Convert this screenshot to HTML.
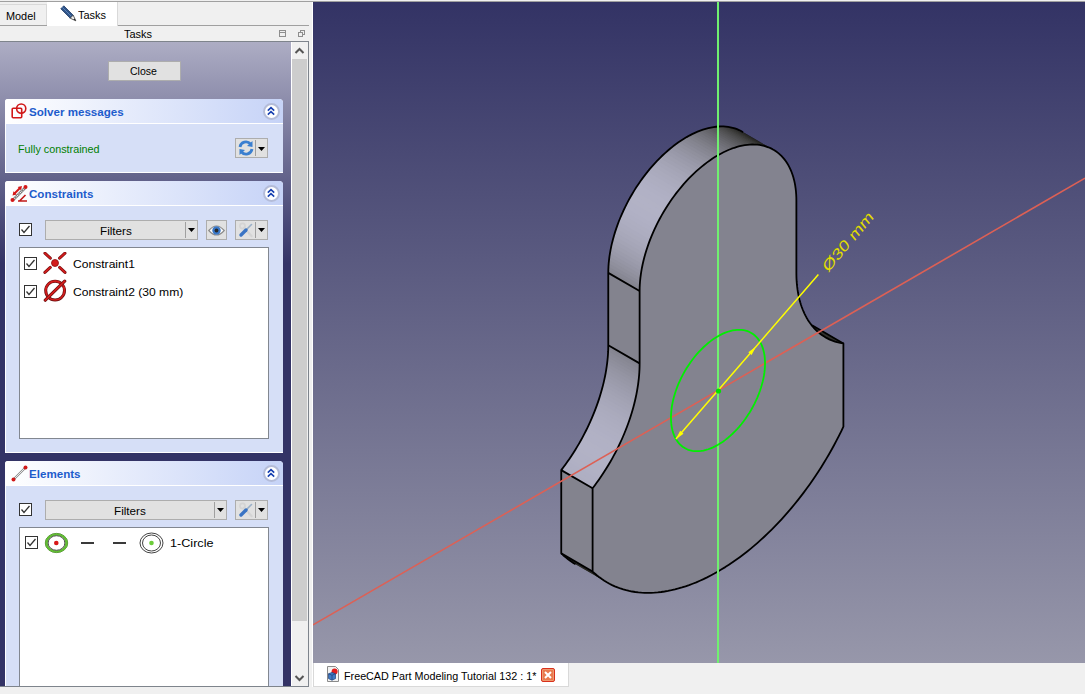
<!DOCTYPE html>
<html><head><meta charset="utf-8">
<style>
*{margin:0;padding:0;box-sizing:border-box}
html,body{width:1085px;height:694px;overflow:hidden;background:#f0f0f0;font-family:"Liberation Sans",sans-serif;font-size:11.7px;color:#000}
.a{position:absolute}
.txt{position:absolute;white-space:nowrap;line-height:1}
.panel{position:absolute;left:5px;width:278px;border-radius:3px 4px 0 0;background:#fff;}
.phead{position:absolute;left:0;top:0;width:278px;height:24px;border-radius:3px 4px 0 0;background:linear-gradient(to right,#ffffff 0%,#c6d3f7 100%)}
.pbody{position:absolute;left:1px;top:25px;width:277px;background:#d6dff7}
.ptitle{position:absolute;left:24px;top:7px;font-weight:bold;font-size:11.6px;color:#1e5ccc;white-space:nowrap;line-height:1}
.coll{position:absolute;left:257.5px;top:3.5px;width:17px;height:17px;border-radius:50%;background:#fff;border:2px solid #b4bcd8}
.cb{position:absolute;width:13px;height:13px;border:1px solid #333;background:#fff}
.btn{position:absolute;background:#e1e1e1;border:1px solid #adadad}
.lst{position:absolute;background:#fff;border:1px solid #828790}
</style></head><body>
<!-- top line -->
<div class="a" style="left:0;top:1px;width:1085px;height:1px;background:#a0a0a0"></div>
<!-- tab bar -->
<div class="a" style="left:0;top:25px;width:309px;height:1px;background:#a0a0a0"></div>
<div class="a" style="left:0;top:4px;width:47px;height:21px;background:#f0f0f0;border-top:1px solid #d9d9d9;border-right:1px solid #d9d9d9"></div>
<div class="txt" style="left:6px;top:10px;font-size:11.7px;transform:scaleX(0.93);transform-origin:0 0">Model</div>
<div class="a" style="left:47px;top:2px;width:71px;height:24px;background:#fff;border-right:1px solid #d9d9d9"></div>
<svg class="a" style="left:60px;top:5px" width="17" height="17"><path d="M0.8 3.8 L3.8 0.8 L13.2 10.2 L10.2 13.2 Z" fill="#2f5488" stroke="#1e3a66" stroke-width="0.8"/><path d="M2.2 2.2 L11.8 11.8" stroke="#5a82b8" stroke-width="1"/><path d="M10.2 13.2 L13.2 10.2 L15.8 15.8 Z" fill="#f4f4f4" stroke="#333" stroke-width="0.8"/><path d="M14.6 13.4 L15.8 15.8 L13.4 14.6Z" fill="#222"/></svg>
<div class="txt" style="left:78px;top:9px;transform:scaleX(0.94);transform-origin:0 0">Tasks</div>
<!-- dock title -->
<div class="txt" style="left:124px;top:28px;transform:scaleX(0.94);transform-origin:0 0">Tasks</div>
<svg class="a" style="left:277px;top:28px" width="32" height="11"><rect x="2.5" y="2.5" width="6" height="6" fill="none" stroke="#8e8e8e"/><line x1="2.5" y1="4.5" x2="8.5" y2="4.5" stroke="#8e8e8e"/><rect x="23.5" y="2.5" width="4" height="4" fill="none" stroke="#8e8e8e"/><rect x="21.5" y="4.5" width="4" height="4" fill="#f0f0f0" stroke="#8e8e8e"/></svg>
<!-- scroll area -->
<div class="a" style="left:0;top:41px;width:309px;height:646px;border-top:1px solid #7e848c;border-right:1px solid #7e848c;border-bottom:1px solid #7e848c;background:linear-gradient(to bottom,#adadc4 0px,#333366 222px,#333366 646px)"></div>
<div class="a" style="left:291px;top:42px;width:17px;height:644px;background:#f0f0f0;border-left:1px solid #fff"></div>
<div class="a" style="left:292px;top:59px;width:15px;height:562px;background:#cdcdcd"></div>
<svg class="a" style="left:292px;top:45px" width="15" height="12"><path d="M3.5 8 L7.5 4 L11.5 8" fill="none" stroke="#555" stroke-width="2"/></svg>
<svg class="a" style="left:292px;top:672px" width="15" height="12"><path d="M3.5 4 L7.5 8 L11.5 4" fill="none" stroke="#555" stroke-width="2"/></svg>
<div class="a" style="left:312px;top:2px;width:1px;height:685px;background:#fff"></div>

<!-- Close button -->
<div class="btn" style="left:108px;top:61px;width:73px;height:20px"></div>
<div class="txt" style="left:129.5px;top:65px;transform:scaleX(0.9);transform-origin:0 0">Close</div>

<!-- Solver messages panel -->
<div class="panel" style="top:99px;height:74px">
  <div class="phead"></div>
  <div class="pbody" style="height:48px"></div>
  <svg class="a" style="left:6px;top:4px" width="16" height="16"><rect x="1.2" y="5.2" width="9.5" height="9.5" rx="1" fill="none" stroke="#d11818" stroke-width="1.6"/><circle cx="10.2" cy="5.6" r="4.6" fill="none" stroke="#d11818" stroke-width="1.6"/></svg>
  <div class="ptitle">Solver messages</div>
  <div class="coll"></div>
  <svg class="a" style="left:259px;top:5px" width="14" height="14"><path d="M3.8 6.6 L7 3.6 L10.2 6.6 M3.8 10.6 L7 7.6 L10.2 10.6" fill="none" stroke="#1840b0" stroke-width="1.6"/></svg>
  <div class="txt" style="left:13px;top:45px;color:#008000;font-size:10.8px">Fully constrained</div>
  <div class="btn" style="left:230px;top:39px;width:33px;height:20px"></div>
  <div class="a" style="left:250px;top:41px;width:1px;height:16px;background:#a0a0a0"></div>
  <svg class="a" style="left:232px;top:40px" width="18" height="18"><path d="M3 8 A6 6 0 0 1 13.5 5" fill="none" stroke="#3a7fd0" stroke-width="2.8"/><path d="M15.5 2 L15.5 8 L10 7Z" fill="#3a7fd0"/><path d="M15 10 A6 6 0 0 1 4.5 13" fill="none" stroke="#3a7fd0" stroke-width="2.8"/><path d="M2.5 16 L2.5 10 L8 11Z" fill="#3a7fd0"/></svg>
  <svg class="a" style="left:253px;top:48px" width="8" height="5"><path d="M0 0 L7 0 L3.5 4Z" fill="#000"/></svg>
</div>

<!-- Constraints panel -->
<div class="panel" style="top:181px;height:272px">
  <div class="phead"></div>
  <div class="pbody" style="height:246px"></div>
  <svg class="a" style="left:5px;top:3px" width="18" height="18"><path d="M4 10 L10.5 3.5" stroke="#d41818" stroke-width="2"/><path d="M2.5 11.5 L3.5 7.2 L6.8 10.5Z M12 2 L7.7 3 L11 6.3Z" fill="#d41818"/><path d="M3 16 L15.5 3.5" stroke="#777" stroke-width="2.6"/><path d="M3 16 L15.5 3.5" stroke="#fff" stroke-width="1.2" stroke-dasharray="1 1"/><circle cx="2.5" cy="16" r="2" fill="#d41818"/><circle cx="15.5" cy="3" r="2" fill="#d41818"/><path d="M8 17 L17 17 M9.5 17 L15.5 11" stroke="#c01818" stroke-width="1.6"/></svg>
  <div class="ptitle">Constraints</div>
  <div class="coll"></div>
  <svg class="a" style="left:259px;top:5px" width="14" height="14"><path d="M3.8 6.6 L7 3.6 L10.2 6.6 M3.8 10.6 L7 7.6 L10.2 10.6" fill="none" stroke="#1840b0" stroke-width="1.6"/></svg>
  <div class="cb" style="left:14px;top:42px"></div>
  <svg class="a" style="left:14px;top:42px" width="13" height="13"><path d="M2.5 6.5 L5 9.5 L10.5 3" fill="none" stroke="#333" stroke-width="1.3"/></svg>
  <div class="btn" style="left:40px;top:39px;width:153px;height:20px"></div>
  <div class="txt" style="left:95px;top:44px">Filters</div>
  <div class="a" style="left:180px;top:41px;width:1px;height:16px;background:#a0a0a0"></div>
  <svg class="a" style="left:183px;top:47px" width="8" height="5"><path d="M0 0 L7 0 L3.5 4Z" fill="#000"/></svg>
  <div class="btn" style="left:201px;top:39px;width:21px;height:20px"></div>
  <svg class="a" style="left:202px;top:41px" width="19" height="17"><path d="M1.8 8.5 Q9.5 -0.5 17.2 8.5 Q9.5 17.5 1.8 8.5Z" fill="#fafafa" stroke="#8a8a8a" stroke-width="1.2"/><circle cx="9.5" cy="8.5" r="4.2" fill="#3a78c8"/><circle cx="9.5" cy="8.5" r="1.9" fill="#2a2a2a"/></svg>
  <div class="btn" style="left:230px;top:39px;width:33px;height:20px"></div>
  <div class="a" style="left:250px;top:41px;width:1px;height:16px;background:#a0a0a0"></div>
  <svg class="a" style="left:233px;top:41px" width="16" height="16"><circle cx="4.5" cy="4" r="2.6" fill="none" stroke="#d4d4d4" stroke-width="1.6"/><path d="M6 6 L13.5 14" stroke="#d4d4d4" stroke-width="2.4" stroke-linecap="round"/><path d="M13.5 2.5 L8 8" stroke="#9ab0c8" stroke-width="1.6" stroke-linecap="round"/><path d="M8 8 L3 13" stroke="#3a74c4" stroke-width="3.4" stroke-linecap="round"/></svg>
  <svg class="a" style="left:253px;top:47px" width="8" height="5"><path d="M0 0 L7 0 L3.5 4Z" fill="#000"/></svg>
  <div class="lst" style="left:14px;top:66px;width:250px;height:192px"></div>
  <div class="cb" style="left:19px;top:76px"></div>
  <svg class="a" style="left:19px;top:76px" width="13" height="13"><path d="M2.5 6.5 L5 9.5 L10.5 3" fill="none" stroke="#333" stroke-width="1.3"/></svg>
  <svg class="a" style="left:38px;top:71px" width="24" height="23"><path d="M1.9 1.2 L7.3 6.2 M22 1.2 L16.6 6.2 M1.9 20.4 L7.3 15.4 M22 20.4 L16.6 15.4" stroke="#7a1010" stroke-width="3" stroke-linecap="round"/><path d="M1.9 1.2 L7.3 6.2 M22 1.2 L16.6 6.2 M1.9 20.4 L7.3 15.4 M22 20.4 L16.6 15.4" stroke="#d41c1c" stroke-width="1.6" stroke-linecap="round"/><circle cx="12" cy="11" r="3.5" fill="#d41c1c" stroke="#8a1010" stroke-width="0.8"/></svg>
  <div class="txt" style="left:68px;top:77px;transform:scaleX(1.035);transform-origin:0 0">Constraint1</div>
  <div class="cb" style="left:19px;top:104px"></div>
  <svg class="a" style="left:19px;top:104px" width="13" height="13"><path d="M2.5 6.5 L5 9.5 L10.5 3" fill="none" stroke="#333" stroke-width="1.3"/></svg>
  <svg class="a" style="left:38px;top:98px" width="24" height="24"><circle cx="12.1" cy="11.6" r="9.4" fill="none" stroke="#6a1010" stroke-width="3"/><circle cx="12.1" cy="11.6" r="9.4" fill="none" stroke="#d41c1c" stroke-width="1.7"/><path d="M2.3 21.2 L21.7 2.2" stroke="#6a1010" stroke-width="3.2" stroke-linecap="round"/><path d="M2.3 21.2 L21.7 2.2" stroke="#d41c1c" stroke-width="1.8" stroke-linecap="round"/></svg>
  <div class="txt" style="left:68px;top:105px;transform:scaleX(1.035);transform-origin:0 0">Constraint2 (30 mm)</div>
</div>

<!-- Elements panel -->
<div class="panel" style="top:461px;height:250px;clip-path:inset(0 0 25px 0)">
  <div class="phead"></div>
  <div class="pbody" style="height:201px"></div>
  <svg class="a" style="left:6px;top:4px" width="17" height="17"><path d="M2.5 14.5 L14.5 2.5" stroke="#888" stroke-width="2.2"/><path d="M2.5 14.5 L14.5 2.5" stroke="#fff" stroke-width="0.8"/><circle cx="2.5" cy="14.5" r="2" fill="#d01818"/><circle cx="14.5" cy="2.5" r="2" fill="#d01818"/></svg>
  <div class="ptitle">Elements</div>
  <div class="coll"></div>
  <svg class="a" style="left:259px;top:5px" width="14" height="14"><path d="M3.8 6.6 L7 3.6 L10.2 6.6 M3.8 10.6 L7 7.6 L10.2 10.6" fill="none" stroke="#1840b0" stroke-width="1.6"/></svg>
  <div class="cb" style="left:14px;top:42px"></div>
  <svg class="a" style="left:14px;top:42px" width="13" height="13"><path d="M2.5 6.5 L5 9.5 L10.5 3" fill="none" stroke="#333" stroke-width="1.3"/></svg>
  <div class="btn" style="left:40px;top:39px;width:182px;height:20px"></div>
  <div class="txt" style="left:109px;top:44px">Filters</div>
  <div class="a" style="left:209px;top:41px;width:1px;height:16px;background:#a0a0a0"></div>
  <svg class="a" style="left:212px;top:47px" width="8" height="5"><path d="M0 0 L7 0 L3.5 4Z" fill="#000"/></svg>
  <div class="btn" style="left:230px;top:39px;width:33px;height:20px"></div>
  <div class="a" style="left:250px;top:41px;width:1px;height:16px;background:#a0a0a0"></div>
  <svg class="a" style="left:233px;top:41px" width="16" height="16"><circle cx="4.5" cy="4" r="2.6" fill="none" stroke="#d4d4d4" stroke-width="1.6"/><path d="M6 6 L13.5 14" stroke="#d4d4d4" stroke-width="2.4" stroke-linecap="round"/><path d="M13.5 2.5 L8 8" stroke="#9ab0c8" stroke-width="1.6" stroke-linecap="round"/><path d="M8 8 L3 13" stroke="#3a74c4" stroke-width="3.4" stroke-linecap="round"/></svg>
  <svg class="a" style="left:253px;top:47px" width="8" height="5"><path d="M0 0 L7 0 L3.5 4Z" fill="#000"/></svg>
  <div class="lst" style="left:14px;top:66px;width:250px;height:170px"></div>
  <div class="cb" style="left:20px;top:75px"></div>
  <svg class="a" style="left:20px;top:75px" width="13" height="13"><path d="M2.5 6.5 L5 9.5 L10.5 3" fill="none" stroke="#333" stroke-width="1.3"/></svg>
  <svg class="a" style="left:39px;top:71px" width="25" height="22"><ellipse cx="12.5" cy="11" rx="11.2" ry="9.6" fill="none" stroke="#4a7a30" stroke-width="1"/><ellipse cx="12.5" cy="11" rx="10" ry="8.6" fill="none" stroke="#62bc34" stroke-width="2.4"/><ellipse cx="12.5" cy="11" rx="8.4" ry="7.3" fill="none" stroke="#3a3a3a" stroke-width="0.9"/><circle cx="12.3" cy="11" r="2.3" fill="#d81818"/></svg>
  <div class="a" style="left:76px;top:81px;width:13px;height:2px;background:#3a3a3a"></div>
  <div class="a" style="left:108px;top:81px;width:13px;height:2px;background:#3a3a3a"></div>
  <svg class="a" style="left:134px;top:71px" width="25" height="22"><ellipse cx="12.5" cy="11" rx="11.5" ry="10" fill="none" stroke="#444" stroke-width="1"/><ellipse cx="12.5" cy="11" rx="9" ry="8" fill="none" stroke="#444" stroke-width="1"/><circle cx="12.5" cy="11" r="2.3" fill="#6ccc3a"/></svg>
  <div class="txt" style="left:165px;top:76px;transform:scaleX(1.08);transform-origin:0 0">1-Circle</div>
</div>

<!-- viewport -->
<svg width="772" height="661" viewBox="313 2 772 661" style="position:absolute;left:313px;top:2px;display:block">
<defs><linearGradient id="bg" x1="0" y1="0" x2="0" y2="1"><stop offset="0" stop-color="rgb(51,51,101)"/><stop offset="1" stop-color="rgb(151,151,170)"/></linearGradient></defs>
<rect x="313" y="2" width="772" height="661" fill="url(#bg)"/>
<path d="M843.40,343.44L840.22,342.88L808.87,324.78L812.05,325.34Z" fill="rgb(52,52,47)"/><path d="M841.27,343.10L838.15,342.42L806.80,324.32L809.92,325.00Z" fill="rgb(48,48,43)"/><path d="M839.18,342.67L836.11,341.87L804.76,323.77L807.83,324.57Z" fill="rgb(44,44,38)"/><path d="M837.12,342.16L834.11,341.24L802.76,323.14L805.77,324.06Z" fill="rgb(40,40,33)"/><path d="M835.10,341.57L832.15,340.53L800.80,322.43L803.75,323.47Z" fill="rgb(35,35,28)"/><path d="M833.12,340.90L830.23,339.73L798.88,321.63L801.77,322.80Z" fill="rgb(31,31,24)"/><path d="M831.18,340.15L828.36,338.86L797.01,320.76L799.83,322.05Z" fill="rgb(27,27,19)"/><path d="M829.28,339.32L826.52,337.91L795.17,319.81L797.93,321.22Z" fill="rgb(23,23,14)"/><path d="M827.43,338.41L825.62,337.42L794.27,319.32L796.08,320.31Z" fill="rgb(19,19,9)"/><path d="M774.38,150.28L771.44,148.67L740.09,130.57L743.03,132.18Z" fill="rgb(17,17,7)"/><path d="M772.44,149.17L769.41,147.73L738.06,129.63L741.09,131.07Z" fill="rgb(23,23,13)"/><path d="M770.44,148.17L767.32,146.91L735.97,128.81L739.09,130.07Z" fill="rgb(28,28,20)"/><path d="M768.38,147.29L765.16,146.21L733.81,128.11L737.03,129.19Z" fill="rgb(34,34,26)"/><path d="M766.25,146.53L762.95,145.63L731.60,127.53L734.90,128.43Z" fill="rgb(39,39,33)"/><path d="M764.07,145.89L760.68,145.17L729.33,127.07L732.72,127.79Z" fill="rgb(45,45,40)"/><path d="M761.83,145.37L758.36,144.84L727.01,126.74L730.48,127.27Z" fill="rgb(50,50,46)"/><path d="M759.53,144.97L755.99,144.62L724.64,126.52L728.18,126.87Z" fill="rgb(56,56,53)"/><path d="M757.19,144.70L753.58,144.54L722.23,126.44L725.84,126.60Z" fill="rgb(61,61,59)"/><path d="M754.79,144.55L751.12,144.57L719.77,126.47L723.44,126.45Z" fill="rgb(67,67,66)"/><path d="M752.36,144.52L748.62,144.73L717.27,126.63L721.01,126.42Z" fill="rgb(72,72,72)"/><path d="M749.88,144.62L746.08,145.01L714.73,126.91L718.53,126.52Z" fill="rgb(77,77,78)"/><path d="M747.36,144.84L743.51,145.41L712.16,127.31L716.01,126.74Z" fill="rgb(82,82,84)"/><path d="M744.81,145.18L740.91,145.94L709.56,127.84L713.46,127.08Z" fill="rgb(87,87,90)"/><path d="M742.22,145.65L738.28,146.59L706.93,128.49L710.87,127.55Z" fill="rgb(92,92,96)"/><path d="M739.60,146.23L735.63,147.36L704.28,129.26L708.25,128.13Z" fill="rgb(97,97,102)"/><path d="M736.96,146.94L732.95,148.24L701.60,130.14L705.61,128.84Z" fill="rgb(102,102,108)"/><path d="M734.30,147.77L730.26,149.25L698.91,131.15L702.95,129.67Z" fill="rgb(107,107,113)"/><path d="M731.61,148.72L727.55,150.37L696.20,132.27L700.26,130.62Z" fill="rgb(111,111,119)"/><path d="M728.91,149.78L724.83,151.61L693.48,133.51L697.56,131.68Z" fill="rgb(116,116,124)"/><path d="M726.19,150.97L722.10,152.97L690.75,134.87L694.84,132.87Z" fill="rgb(120,120,129)"/><path d="M723.47,152.26L719.37,154.44L688.02,136.34L692.12,134.16Z" fill="rgb(125,125,134)"/><path d="M720.74,153.68L716.63,156.02L685.28,137.92L689.39,135.58Z" fill="rgb(129,129,139)"/><path d="M718.00,155.20L713.90,157.71L682.55,139.61L686.65,137.10Z" fill="rgb(133,133,144)"/><path d="M715.26,156.83L711.17,159.50L679.82,141.40L683.91,138.73Z" fill="rgb(136,136,148)"/><path d="M712.53,158.58L708.45,161.40L677.10,143.30L681.18,140.48Z" fill="rgb(140,140,153)"/><path d="M709.81,160.43L705.74,163.41L674.39,145.31L678.46,142.33Z" fill="rgb(144,144,157)"/><path d="M707.09,162.38L703.05,165.51L671.70,147.41L675.74,144.28Z" fill="rgb(147,147,161)"/><path d="M704.39,164.43L700.37,167.71L669.02,149.61L673.04,146.33Z" fill="rgb(150,150,165)"/><path d="M701.70,166.59L697.72,170.01L666.37,151.91L670.35,148.49Z" fill="rgb(153,153,169)"/><path d="M699.04,168.84L695.09,172.40L663.74,154.30L667.69,150.74Z" fill="rgb(156,156,172)"/><path d="M696.40,171.18L692.49,174.87L661.14,156.77L665.05,153.08Z" fill="rgb(159,159,175)"/><path d="M693.78,173.61L689.92,177.44L658.57,159.34L662.43,155.51Z" fill="rgb(161,161,178)"/><path d="M691.19,176.13L687.38,180.08L656.03,161.98L659.84,158.03Z" fill="rgb(164,164,181)"/><path d="M688.64,178.74L684.88,182.81L653.53,164.71L657.29,160.64Z" fill="rgb(166,166,184)"/><path d="M686.12,181.43L682.42,185.62L651.07,167.52L654.77,163.33Z" fill="rgb(168,168,186)"/><path d="M683.64,184.20L680.01,188.49L648.66,170.39L652.29,166.10Z" fill="rgb(170,170,188)"/><path d="M681.21,187.04L677.64,191.44L646.29,173.34L649.85,168.94Z" fill="rgb(171,171,190)"/><path d="M678.81,189.95L675.32,194.45L643.97,176.35L647.46,171.85Z" fill="rgb(173,173,192)"/><path d="M676.47,192.93L673.05,197.53L641.70,179.43L645.12,174.83Z" fill="rgb(174,174,193)"/><path d="M674.17,195.98L670.84,200.66L639.49,182.56L642.82,177.88Z" fill="rgb(175,175,195)"/><path d="M671.93,199.08L668.68,203.85L637.33,185.75L640.58,180.98Z" fill="rgb(176,176,196)"/><path d="M669.75,202.24L666.59,207.09L635.24,188.99L638.40,184.14Z" fill="rgb(177,177,197)"/><path d="M667.62,205.46L664.56,210.38L633.21,192.28L636.27,187.36Z" fill="rgb(177,177,197)"/><path d="M665.56,208.72L662.59,213.71L631.24,195.61L634.21,190.62Z" fill="rgb(178,178,197)"/><path d="M663.56,212.03L660.69,217.08L629.34,198.98L632.21,193.93Z" fill="rgb(178,178,198)"/><path d="M661.62,215.38L658.86,220.48L627.51,202.38L630.27,197.28Z" fill="rgb(178,178,197)"/><path d="M659.76,218.77L657.10,223.92L625.75,205.82L628.41,200.67Z" fill="rgb(177,177,197)"/><path d="M657.96,222.19L655.42,227.38L624.07,209.28L626.61,204.09Z" fill="rgb(177,177,197)"/><path d="M656.24,225.64L653.81,230.86L622.46,212.76L624.89,207.54Z" fill="rgb(176,176,196)"/><path d="M654.59,229.11L652.28,234.36L620.93,216.26L623.24,211.01Z" fill="rgb(175,175,195)"/><path d="M653.02,232.61L650.83,237.88L619.48,219.78L621.67,214.51Z" fill="rgb(174,174,193)"/><path d="M651.53,236.12L649.46,241.40L618.11,223.30L620.18,218.02Z" fill="rgb(173,173,192)"/><path d="M650.12,239.64L648.18,244.93L616.83,226.83L618.77,221.54Z" fill="rgb(171,171,190)"/><path d="M648.80,243.17L646.98,248.46L615.63,230.36L617.45,225.07Z" fill="rgb(170,170,188)"/><path d="M647.56,246.70L645.87,251.99L614.52,233.89L616.21,228.60Z" fill="rgb(168,168,186)"/><path d="M646.40,250.23L644.84,255.51L613.49,237.41L615.05,232.13Z" fill="rgb(166,166,184)"/><path d="M645.33,253.75L643.91,259.02L612.56,240.92L613.98,235.65Z" fill="rgb(164,164,181)"/><path d="M644.35,257.27L643.06,262.51L611.71,244.41L613.00,239.17Z" fill="rgb(161,161,178)"/><path d="M643.46,260.77L642.31,265.98L610.96,247.88L612.11,242.67Z" fill="rgb(159,159,175)"/><path d="M642.66,264.25L641.65,269.43L610.29,251.33L611.31,246.15Z" fill="rgb(156,156,172)"/><path d="M641.95,267.71L641.08,272.85L609.73,254.75L610.60,249.61Z" fill="rgb(153,153,169)"/><path d="M641.34,271.15L640.60,276.23L609.25,258.13L609.99,253.05Z" fill="rgb(150,150,165)"/><path d="M640.82,274.55L640.22,279.58L608.87,261.48L609.47,256.45Z" fill="rgb(147,147,161)"/><path d="M640.39,277.91L639.93,282.88L608.58,264.78L609.04,259.81Z" fill="rgb(144,144,157)"/><path d="M640.05,281.24L639.74,286.15L608.39,268.05L608.70,263.14Z" fill="rgb(140,140,153)"/><path d="M639.82,284.53L639.65,289.36L608.30,271.26L608.47,266.43Z" fill="rgb(136,136,148)"/><path d="M639.67,287.76L639.62,327.15L608.27,309.05L608.32,269.66Z" fill="rgb(133,133,144)"/><path d="M639.62,290.95L639.61,364.82L608.26,346.72L608.27,272.85Z" fill="rgb(131,131,142)"/><path d="M639.62,363.35L639.54,367.77L608.19,349.67L608.27,345.25Z" fill="rgb(132,132,143)"/><path d="M639.59,366.29L639.42,370.76L608.07,352.66L608.24,348.19Z" fill="rgb(135,135,147)"/><path d="M639.50,369.26L639.22,373.78L607.87,355.68L608.15,351.16Z" fill="rgb(138,138,150)"/><path d="M639.34,372.26L638.97,376.83L607.62,358.73L607.99,354.16Z" fill="rgb(140,140,153)"/><path d="M639.11,375.30L638.65,379.91L607.30,361.81L607.76,357.20Z" fill="rgb(143,143,156)"/><path d="M638.82,378.37L638.27,383.02L606.92,364.92L607.47,360.27Z" fill="rgb(145,145,159)"/><path d="M638.47,381.46L637.82,386.15L606.47,368.05L607.12,363.36Z" fill="rgb(148,148,162)"/><path d="M638.06,384.58L637.31,389.30L605.96,371.20L606.71,366.48Z" fill="rgb(150,150,165)"/><path d="M637.58,387.72L636.74,392.47L605.39,374.37L606.23,369.62Z" fill="rgb(152,152,167)"/><path d="M637.04,390.88L636.10,395.67L604.75,377.57L605.69,372.78Z" fill="rgb(154,154,170)"/><path d="M636.44,394.07L635.41,398.87L604.06,380.77L605.09,375.97Z" fill="rgb(156,156,172)"/><path d="M635.77,397.27L634.65,402.09L603.30,383.99L604.42,379.17Z" fill="rgb(158,158,175)"/><path d="M635.05,400.48L633.83,405.33L602.48,387.23L603.70,382.38Z" fill="rgb(160,160,177)"/><path d="M634.26,403.71L632.96,408.57L601.61,390.47L602.91,385.61Z" fill="rgb(162,162,179)"/><path d="M633.41,406.95L632.02,411.82L600.67,393.72L602.06,388.85Z" fill="rgb(164,164,181)"/><path d="M632.50,410.20L631.02,415.08L599.67,396.98L601.15,392.10Z" fill="rgb(165,165,183)"/><path d="M631.53,413.45L629.96,418.34L598.61,400.24L600.18,395.35Z" fill="rgb(167,167,185)"/><path d="M630.51,416.71L628.85,421.61L597.50,403.51L599.16,398.61Z" fill="rgb(168,168,187)"/><path d="M629.42,419.97L627.68,424.87L596.33,406.77L598.07,401.87Z" fill="rgb(170,170,188)"/><path d="M628.28,423.24L626.45,428.13L595.10,410.03L596.93,405.14Z" fill="rgb(171,171,190)"/><path d="M627.08,426.50L625.17,431.38L593.82,413.28L595.73,408.40Z" fill="rgb(172,172,191)"/><path d="M625.82,429.76L623.83,434.63L592.48,416.53L594.47,411.66Z" fill="rgb(173,173,192)"/><path d="M624.51,433.01L622.44,437.87L591.09,419.77L593.16,414.91Z" fill="rgb(174,174,193)"/><path d="M623.15,436.25L620.99,441.10L589.64,423.00L591.80,418.15Z" fill="rgb(175,175,194)"/><path d="M621.73,439.49L619.50,444.32L588.15,426.22L590.38,421.39Z" fill="rgb(175,175,195)"/><path d="M620.26,442.71L617.95,447.52L586.60,429.42L588.91,424.61Z" fill="rgb(176,176,196)"/><path d="M618.74,445.92L616.35,450.70L585.00,432.60L587.39,427.82Z" fill="rgb(177,177,196)"/><path d="M617.16,449.11L614.70,453.86L583.35,435.76L585.81,431.01Z" fill="rgb(177,177,197)"/><path d="M615.54,452.29L613.01,457.01L581.66,438.91L584.19,434.19Z" fill="rgb(177,177,197)"/><path d="M613.87,455.44L611.27,460.13L579.92,442.03L582.52,437.34Z" fill="rgb(178,178,197)"/><path d="M612.15,458.57L609.48,463.22L578.13,445.12L580.80,440.47Z" fill="rgb(178,178,198)"/><path d="M610.38,461.68L607.64,466.29L576.29,448.19L579.03,443.58Z" fill="rgb(178,178,198)"/><path d="M608.57,464.76L605.77,469.33L574.42,451.23L577.22,446.66Z" fill="rgb(178,178,197)"/><path d="M606.72,467.82L603.85,472.34L572.50,454.24L575.37,449.72Z" fill="rgb(177,177,197)"/><path d="M604.82,470.84L601.89,475.31L570.54,457.21L573.47,452.74Z" fill="rgb(177,177,197)"/><path d="M602.88,473.83L599.89,478.25L568.54,460.15L571.53,455.73Z" fill="rgb(177,177,196)"/><path d="M600.90,476.79L597.85,481.15L566.50,463.05L569.55,458.69Z" fill="rgb(176,176,196)"/><path d="M598.88,479.71L595.78,484.02L564.43,465.92L567.53,461.61Z" fill="rgb(175,175,195)"/><path d="M596.82,482.59L593.66,486.84L562.31,468.74L565.47,464.49Z" fill="rgb(175,175,194)"/><path d="M594.73,485.44L592.60,529.87L561.25,511.77L563.38,467.34Z" fill="rgb(174,174,193)"/><path d="M592.60,488.24L593.71,572.52L562.36,554.42L561.25,470.14Z" fill="rgb(131,131,142)"/><path d="M592.60,571.50L595.95,574.52L564.60,556.42L561.25,553.40Z" fill="rgb(38,38,31)"/><path d="M594.81,573.55L598.27,576.43L566.92,558.33L563.46,555.45Z" fill="rgb(34,34,27)"/><path d="M597.09,575.50L600.64,578.23L569.29,560.13L565.74,557.40Z" fill="rgb(31,31,23)"/><path d="M599.44,577.35L603.08,579.93L571.73,561.83L568.09,559.25Z" fill="rgb(27,27,18)"/><path d="M601.85,579.10L605.58,581.53L574.23,563.43L570.50,561.00Z" fill="rgb(23,23,14)"/><path d="M604.32,580.75L606.85,582.30L575.50,564.20L572.97,562.65Z" fill="rgb(19,19,9)"/>
<path d="M812.05,325.34L809.92,325.00L807.83,324.57L805.77,324.06L803.75,323.47L801.77,322.80L799.83,322.05L797.93,321.22L796.08,320.31L794.27,319.32M743.03,132.18L741.09,131.07L739.09,130.07L737.03,129.19L734.90,128.43L732.72,127.79L730.48,127.27L728.18,126.87L725.84,126.60L723.44,126.45L721.01,126.42L718.53,126.52L716.01,126.74L713.46,127.08L710.87,127.55L708.25,128.13L705.61,128.84L702.95,129.67L700.26,130.62L697.56,131.68L694.84,132.87L692.12,134.16L689.39,135.58L686.65,137.10L683.91,138.73L681.18,140.48L678.46,142.33L675.74,144.28L673.04,146.33L670.35,148.49L667.69,150.74L665.05,153.08L662.43,155.51L659.84,158.03L657.29,160.64L654.77,163.33L652.29,166.10L649.85,168.94L647.46,171.85L645.12,174.83L642.82,177.88L640.58,180.98L638.40,184.14L636.27,187.36L634.21,190.62L632.21,193.93L630.27,197.28L628.41,200.67L626.61,204.09L624.89,207.54L623.24,211.01L621.67,214.51L620.18,218.02L618.77,221.54L617.45,225.07L616.21,228.60L615.05,232.13L613.98,235.65L613.00,239.17L612.11,242.67L611.31,246.15L610.60,249.61L609.99,253.05L609.47,256.45L609.04,259.81L608.70,263.14L608.47,266.43L608.32,269.66L608.27,272.85L608.27,345.25L608.24,348.19L608.15,351.16L607.99,354.16L607.76,357.20L607.47,360.27L607.12,363.36L606.71,366.48L606.23,369.62L605.69,372.78L605.09,375.97L604.42,379.17L603.70,382.38L602.91,385.61L602.06,388.85L601.15,392.10L600.18,395.35L599.16,398.61L598.07,401.87L596.93,405.14L595.73,408.40L594.47,411.66L593.16,414.91L591.80,418.15L590.38,421.39L588.91,424.61L587.39,427.82L585.81,431.01L584.19,434.19L582.52,437.34L580.80,440.47L579.03,443.58L577.22,446.66L575.37,449.72L573.47,452.74L571.53,455.73L569.55,458.69L567.53,461.61L565.47,464.49L563.38,467.34L561.25,470.14L561.25,553.40L563.46,555.45L565.74,557.40L568.09,559.25L570.50,561.00L572.97,562.65L575.50,564.20" fill="none" stroke="#000" stroke-width="1.8" stroke-linejoin="round"/>
<path d="M639.62,290.95L608.27,272.85M639.62,363.35L608.27,345.25M592.60,488.24L561.25,470.14M592.60,571.50L561.25,553.40M843.40,343.44L812.05,325.34" fill="none" stroke="#000" stroke-width="1.8"/>
<path d="M843.40,426.70L843.40,343.44L841.27,343.10L839.18,342.67L837.12,342.16L835.10,341.57L833.12,340.90L831.18,340.15L829.28,339.32L827.43,338.41L825.62,337.42L823.85,336.35L822.13,335.20L820.46,333.98L818.84,332.67L817.26,331.30L815.74,329.85L814.27,328.32L812.85,326.73L811.49,325.06L810.18,323.32L808.92,321.51L807.72,319.64L806.58,317.69L805.49,315.68L804.47,313.61L803.50,311.47L802.59,309.27L801.74,307.01L800.95,304.69L800.23,302.32L799.56,299.89L798.96,297.40L798.42,294.86L797.94,292.27L797.53,289.63L797.18,286.94L796.89,284.21L796.66,281.43L796.50,278.61L796.41,275.75L796.38,272.85L796.38,200.45L796.33,197.32L796.18,194.25L795.95,191.24L795.61,188.30L795.18,185.42L794.66,182.62L794.05,179.90L793.34,177.26L792.54,174.70L791.65,172.23L790.67,169.84L789.60,167.55L788.44,165.36L787.20,163.26L785.88,161.26L784.47,159.37L782.98,157.58L781.41,155.90L779.76,154.33L778.04,152.86L776.24,151.52L774.38,150.28L772.44,149.17L770.44,148.17L768.38,147.29L766.25,146.53L764.07,145.89L761.83,145.37L759.53,144.97L757.19,144.70L754.79,144.55L752.36,144.52L749.88,144.62L747.36,144.84L744.81,145.18L742.22,145.65L739.60,146.23L736.96,146.94L734.30,147.77L731.61,148.72L728.91,149.78L726.19,150.97L723.47,152.26L720.74,153.68L718.00,155.20L715.26,156.83L712.53,158.58L709.81,160.43L707.09,162.38L704.39,164.43L701.70,166.59L699.04,168.84L696.40,171.18L693.78,173.61L691.19,176.13L688.64,178.74L686.12,181.43L683.64,184.20L681.21,187.04L678.81,189.95L676.47,192.93L674.17,195.98L671.93,199.08L669.75,202.24L667.62,205.46L665.56,208.72L663.56,212.03L661.62,215.38L659.76,218.77L657.96,222.19L656.24,225.64L654.59,229.11L653.02,232.61L651.53,236.12L650.12,239.64L648.80,243.17L647.56,246.70L646.40,250.23L645.33,253.75L644.35,257.27L643.46,260.77L642.66,264.25L641.95,267.71L641.34,271.15L640.82,274.55L640.39,277.91L640.05,281.24L639.82,284.53L639.67,287.76L639.62,290.95L639.62,363.35L639.59,366.29L639.50,369.26L639.34,372.26L639.11,375.30L638.82,378.37L638.47,381.46L638.06,384.58L637.58,387.72L637.04,390.88L636.44,394.07L635.77,397.27L635.05,400.48L634.26,403.71L633.41,406.95L632.50,410.20L631.53,413.45L630.51,416.71L629.42,419.97L628.28,423.24L627.08,426.50L625.82,429.76L624.51,433.01L623.15,436.25L621.73,439.49L620.26,442.71L618.74,445.92L617.16,449.11L615.54,452.29L613.87,455.44L612.15,458.57L610.38,461.68L608.57,464.76L606.72,467.82L604.82,470.84L602.88,473.83L600.90,476.79L598.88,479.71L596.82,482.59L594.73,485.44L592.60,488.24L592.60,571.50L594.81,573.55L597.09,575.50L599.44,577.35L601.85,579.10L604.32,580.75L606.85,582.30L609.44,583.74L612.09,585.08L614.80,586.32L617.56,587.45L620.38,588.48L623.25,589.39L626.17,590.21L629.14,590.91L632.15,591.51L635.22,591.99L638.33,592.37L641.48,592.65L644.67,592.81L647.90,592.86L651.17,592.81L654.47,592.65L657.81,592.37L661.18,591.99L664.58,591.51L668.01,590.91L671.47,590.21L674.95,589.39L678.46,588.48L681.99,587.45L685.53,586.32L689.10,585.08L692.67,583.74L696.27,582.30L699.87,580.75L703.49,579.10L707.11,577.35L710.73,575.50L714.37,573.55L718.00,571.50L721.63,569.35L725.27,567.11L728.89,564.77L732.51,562.34L736.13,559.82L739.73,557.20L743.33,554.50L746.90,551.71L750.47,548.83L754.01,545.87L757.54,542.82L761.05,539.69L764.53,536.48L767.99,533.19L771.42,529.83L774.82,526.39L778.19,522.87L781.53,519.29L784.83,515.64L788.10,511.92L791.33,508.13L794.52,504.28L797.67,500.37L800.78,496.41L803.85,492.38L806.86,488.30L809.83,484.17L812.75,479.98L815.62,475.75L818.44,471.48L821.20,467.15L823.91,462.79L826.56,458.39L829.15,453.95L831.68,449.48L834.15,444.98L836.56,440.45L838.91,435.89L841.19,431.31Z" fill="rgb(131, 131, 143)"/>
<path d="M843.40,426.70L843.40,343.44L841.27,343.10L839.18,342.67L837.12,342.16L835.10,341.57L833.12,340.90L831.18,340.15L829.28,339.32L827.43,338.41L825.62,337.42L823.85,336.35L822.13,335.20L820.46,333.98L818.84,332.67L817.26,331.30L815.74,329.85L814.27,328.32L812.85,326.73L811.49,325.06L810.18,323.32L808.92,321.51L807.72,319.64L806.58,317.69L805.49,315.68L804.47,313.61L803.50,311.47L802.59,309.27L801.74,307.01L800.95,304.69L800.23,302.32L799.56,299.89L798.96,297.40L798.42,294.86L797.94,292.27L797.53,289.63L797.18,286.94L796.89,284.21L796.66,281.43L796.50,278.61L796.41,275.75L796.38,272.85L796.38,200.45L796.33,197.32L796.18,194.25L795.95,191.24L795.61,188.30L795.18,185.42L794.66,182.62L794.05,179.90L793.34,177.26L792.54,174.70L791.65,172.23L790.67,169.84L789.60,167.55L788.44,165.36L787.20,163.26L785.88,161.26L784.47,159.37L782.98,157.58L781.41,155.90L779.76,154.33L778.04,152.86L776.24,151.52L774.38,150.28L772.44,149.17L770.44,148.17L768.38,147.29L766.25,146.53L764.07,145.89L761.83,145.37L759.53,144.97L757.19,144.70L754.79,144.55L752.36,144.52L749.88,144.62L747.36,144.84L744.81,145.18L742.22,145.65L739.60,146.23L736.96,146.94L734.30,147.77L731.61,148.72L728.91,149.78L726.19,150.97L723.47,152.26L720.74,153.68L718.00,155.20L715.26,156.83L712.53,158.58L709.81,160.43L707.09,162.38L704.39,164.43L701.70,166.59L699.04,168.84L696.40,171.18L693.78,173.61L691.19,176.13L688.64,178.74L686.12,181.43L683.64,184.20L681.21,187.04L678.81,189.95L676.47,192.93L674.17,195.98L671.93,199.08L669.75,202.24L667.62,205.46L665.56,208.72L663.56,212.03L661.62,215.38L659.76,218.77L657.96,222.19L656.24,225.64L654.59,229.11L653.02,232.61L651.53,236.12L650.12,239.64L648.80,243.17L647.56,246.70L646.40,250.23L645.33,253.75L644.35,257.27L643.46,260.77L642.66,264.25L641.95,267.71L641.34,271.15L640.82,274.55L640.39,277.91L640.05,281.24L639.82,284.53L639.67,287.76L639.62,290.95L639.62,363.35L639.59,366.29L639.50,369.26L639.34,372.26L639.11,375.30L638.82,378.37L638.47,381.46L638.06,384.58L637.58,387.72L637.04,390.88L636.44,394.07L635.77,397.27L635.05,400.48L634.26,403.71L633.41,406.95L632.50,410.20L631.53,413.45L630.51,416.71L629.42,419.97L628.28,423.24L627.08,426.50L625.82,429.76L624.51,433.01L623.15,436.25L621.73,439.49L620.26,442.71L618.74,445.92L617.16,449.11L615.54,452.29L613.87,455.44L612.15,458.57L610.38,461.68L608.57,464.76L606.72,467.82L604.82,470.84L602.88,473.83L600.90,476.79L598.88,479.71L596.82,482.59L594.73,485.44L592.60,488.24L592.60,571.50L594.81,573.55L597.09,575.50L599.44,577.35L601.85,579.10L604.32,580.75L606.85,582.30L609.44,583.74L612.09,585.08L614.80,586.32L617.56,587.45L620.38,588.48L623.25,589.39L626.17,590.21L629.14,590.91L632.15,591.51L635.22,591.99L638.33,592.37L641.48,592.65L644.67,592.81L647.90,592.86L651.17,592.81L654.47,592.65L657.81,592.37L661.18,591.99L664.58,591.51L668.01,590.91L671.47,590.21L674.95,589.39L678.46,588.48L681.99,587.45L685.53,586.32L689.10,585.08L692.67,583.74L696.27,582.30L699.87,580.75L703.49,579.10L707.11,577.35L710.73,575.50L714.37,573.55L718.00,571.50L721.63,569.35L725.27,567.11L728.89,564.77L732.51,562.34L736.13,559.82L739.73,557.20L743.33,554.50L746.90,551.71L750.47,548.83L754.01,545.87L757.54,542.82L761.05,539.69L764.53,536.48L767.99,533.19L771.42,529.83L774.82,526.39L778.19,522.87L781.53,519.29L784.83,515.64L788.10,511.92L791.33,508.13L794.52,504.28L797.67,500.37L800.78,496.41L803.85,492.38L806.86,488.30L809.83,484.17L812.75,479.98L815.62,475.75L818.44,471.48L821.20,467.15L823.91,462.79L826.56,458.39L829.15,453.95L831.68,449.48L834.15,444.98L836.56,440.45L838.91,435.89L841.19,431.31Z" fill="none" stroke="#000" stroke-width="1.8" stroke-linejoin="round"/>
<line x1="313" y1="624.9" x2="1085" y2="178.1" stroke="#dd6055" stroke-width="1.6"/>
<line x1="718" y1="2" x2="718" y2="663" stroke="#70f070" stroke-width="2"/>
<path d="M765.03,363.35L764.96,360.55L764.77,357.82L764.45,355.19L764.00,352.65L763.42,350.22L762.72,347.90L761.90,345.69L760.96,343.61L759.90,341.66L758.73,339.84L757.44,338.16L756.04,336.62L754.55,335.23L752.95,333.99L751.25,332.91L749.47,331.98L747.59,331.21L745.64,330.61L743.61,330.17L741.51,329.90L739.35,329.79L737.13,329.85L734.85,330.08L732.53,330.47L730.17,331.02L727.78,331.74L725.36,332.62L722.92,333.66L720.46,334.85L718.00,336.20L715.54,337.70L713.08,339.34L710.64,341.12L708.22,343.03L705.83,345.08L703.47,347.25L701.15,349.54L698.87,351.94L696.65,354.44L694.49,357.05L692.39,359.75L690.36,362.53L688.41,365.39L686.53,368.31L684.75,371.30L683.05,374.34L681.45,377.43L679.96,380.55L678.56,383.70L677.27,386.86L676.10,390.04L675.04,393.22L674.10,396.39L673.28,399.54L672.58,402.67L672.00,405.77L671.55,408.82L671.23,411.83L671.04,414.77L670.97,417.65L671.04,420.45L671.23,423.18L671.55,425.81L672.00,428.35L672.58,430.78L673.28,433.10L674.10,435.31L675.04,437.39L676.10,439.34L677.27,441.16L678.56,442.84L679.96,444.38L681.45,445.77L683.05,447.01L684.75,448.09L686.53,449.02L688.41,449.79L690.36,450.39L692.39,450.83L694.49,451.10L696.65,451.21L698.87,451.15L701.15,450.92L703.47,450.53L705.83,449.98L708.22,449.26L710.64,448.38L713.08,447.34L715.54,446.15L718.00,444.80L720.46,443.30L722.92,441.66L725.36,439.88L727.78,437.97L730.17,435.92L732.53,433.75L734.85,431.46L737.13,429.06L739.35,426.56L741.51,423.95L743.61,421.25L745.64,418.47L747.59,415.61L749.47,412.69L751.25,409.70L752.95,406.66L754.55,403.57L756.04,400.45L757.44,397.30L758.73,394.14L759.90,390.96L760.96,387.78L761.90,384.61L762.72,381.46L763.42,378.33L764.00,375.23L764.45,372.18L764.77,369.17L764.96,366.23L765.03,363.35Z" fill="none" stroke="#00f000" stroke-width="1.8"/>
<line x1="675.94" y1="439.07" x2="818.38" y2="274.59" stroke="#ffff00" stroke-width="1.5"/>
<path d="M675.94,439.07L683.49,433.70L680.17,430.82Z" fill="#ffff00"/><path d="M755.85,346.79L748.30,352.15L751.63,355.03Z" fill="#ffff00"/>
<circle cx="718.5" cy="391.0" r="2.6" fill="#00e000"/>
<text x="0" y="0" transform="translate(828,273) rotate(-50) skewX(-10)" font-family="Liberation Sans" font-size="14.5" fill="#e0dc00" textLength="72" lengthAdjust="spacingAndGlyphs">Ø30 mm</text>
</svg>

<!-- document tab -->
<div class="a" style="left:313px;top:663px;width:256px;height:24px;background:#fff;border:1px solid #d9d9d9;border-top:none"></div>
<svg class="a" style="left:326px;top:665px" width="14" height="18"><path d="M1.5 1.5 L9.5 1.5 L12.5 4.5 L12.5 16.5 L1.5 16.5Z" fill="#f2f2f2" stroke="#8a8a8a"/><circle cx="8.6" cy="6.6" r="3" fill="#e41c1c"/><path d="M2.5 8.8 L6 7.4 L9.5 8.8 L9.5 13.6 L6 15.2 L2.5 13.6Z" fill="#3f7ac4" stroke="#1e3f7a" stroke-width="0.7"/><path d="M2.5 8.8 L6 10.2 L9.5 8.8 M6 10.2 L6 15.2" fill="none" stroke="#1e3f7a" stroke-width="0.7"/></svg>
<div class="txt" style="left:344px;top:671px;font-size:10.75px">FreeCAD Part Modeling Tutorial 132 : 1*</div>
<div class="a" style="left:541px;top:668px;width:14px;height:14px;background:#e97b4e;border:1px solid #d8301c;border-radius:2px;box-shadow:inset 0 0 0 1px #ee9a70"></div>
<svg class="a" style="left:541px;top:668px" width="14" height="14"><path d="M4 4 L10 10 M10 4 L4 10" stroke="#fff" stroke-width="2"/></svg>
</body></html>
